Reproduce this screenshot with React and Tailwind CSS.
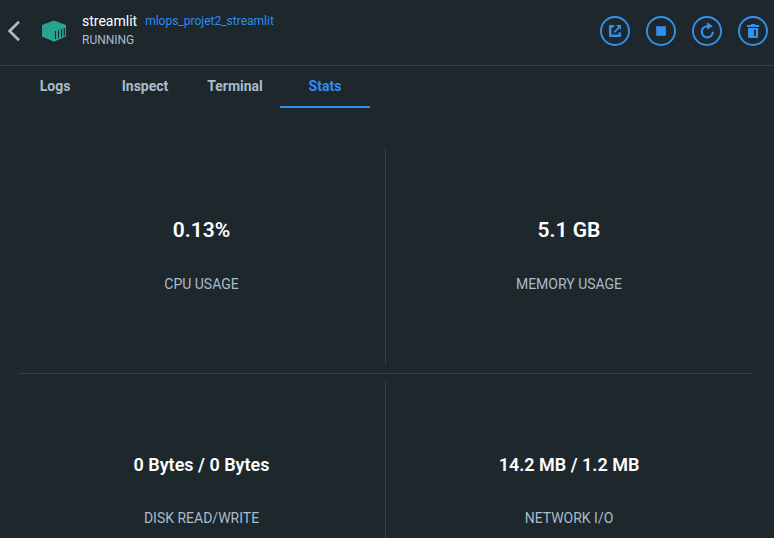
const actions = [
  {
    name: 'Open in browser',
    icon: (
      <g>
        <path d="M14 10.2H10.2V19.8H19.8V16.6" fill="none" stroke="currentColor" strokeWidth="2.5" strokeLinejoin="round" />
        <path d="M14.2 16.4L19 11.4" fill="none" stroke="currentColor" strokeWidth="1.7" />
        <path d="M16 9H21V14Z" fill="currentColor" />
      </g>
    ),
  },
  { name: 'Stop', icon: <rect x="10.2" y="10.2" width="9.6" height="9.6" fill="currentColor" /> },
  {
    name: 'Restart',
    icon: (
      <g>
        <path d="M15.4 10.2A5.6 5.6 0 1 0 20.9 15.8" fill="none" stroke="currentColor" strokeWidth="2.1" />
        <path d="M15 6.2L21 10.2L15 13.6Z" fill="currentColor" />
      </g>
    ),
  },
  {
    name: 'Delete',
    icon: (
      <g fill="currentColor">
        <path d="M9 9H12.6L13.2 8H17L17.6 9H21.2V11H9Z" />
        <path
          fillRule="evenodd"
          d="M10 12H20.2V20.4Q20.2 22 18.6 22H11.6Q10 22 10 20.4ZM16 13.8V19.8H17.8V13.8Z"
        />
      </g>
    ),
  },
];

const tabs = ['Logs', 'Inspect', 'Terminal', 'Stats'];

function Stat({ value, label, className, valueClass }) {
  return (
    <div className={`flex flex-col items-center whitespace-nowrap ${className}`}>
      <div className={`flex h-7 items-center font-semibold text-white ${valueClass}`}>{value}</div>
      <div className="mt-[29px] text-sm leading-5 text-[#a9bccb]">{label}</div>
    </div>
  );
}

export default function App() {
  return (
    <div className="flex h-[538px] w-[774px] flex-col overflow-hidden bg-[#1d272c] font-['Roboto',sans-serif]">
      <header className="flex h-[66px] shrink-0 items-start border-b border-[#333e45] pr-[6px] pl-[7px]">
        <svg className="mt-[20px] h-[22px] w-[14px]" viewBox="0 0 14 22" aria-label="Back">
          <path d="M12 1.8L2.6 11L12 20.2" fill="none" stroke="#a9bccb" strokeWidth="2.7" />
        </svg>
        <svg className="mt-[20px] ml-[21px] h-[22px] w-[24px]" viewBox="0 0 24 22">
          <path d="M12 0.5L24 5V16.5L12 21.7L0 16.5V5Z" fill="#29a391" />
          <path d="M13.5 11V19M16.5 10.2V18.2M19.5 9V17M22.3 8V16" stroke="#1d272c" strokeWidth="1.1" />
        </svg>
        <div className="ml-4 pt-[11px]">
          <div className="flex items-start gap-2">
            <h1 className="text-sm leading-5 text-white">streamlit</h1>
            <a className="text-xs leading-5 text-[#2f8ef4]">mlops_projet2_streamlit</a>
          </div>
          <div className="text-xs leading-[18px] text-[#a9bccb]">RUNNING</div>
        </div>
        <div className="mt-4 ml-auto flex gap-4 text-[#3391ee]">
          {actions.map(({ name, icon }) => (
            <button key={name} aria-label={name} className="size-[30px]">
              <svg className="size-[30px]" viewBox="0 0 30 30">
                <circle cx="15" cy="15" r="14" fill="none" stroke="currentColor" strokeWidth="1.9" />
                {icon}
              </svg>
            </button>
          ))}
        </div>
      </header>
      <nav className="flex h-[42px] shrink-0 pl-[10px]">
        {tabs.map((tab) => (
          <button
            key={tab}
            className={`flex w-[90px] justify-center border-b-2 pt-[10px] text-sm leading-5 font-bold ${
              tab === 'Stats' ? 'border-[#3391ee] text-[#2f8ef4]' : 'border-transparent text-[#a9bccb]'
            }`}
          >
            {tab}
          </button>
        ))}
      </nav>
      <main className="mt-10 mr-[22px] ml-[18px] flex flex-col">
        <div className="grid h-[217px] shrink-0 grid-cols-[368px_366px]">
          <Stat value="0.13%" label="CPU USAGE" className="border-r border-[#333e45] pt-[69px]" valueClass="text-[21px]" />
          <Stat value="5.1 GB" label="MEMORY USAGE" className="pt-[69px]" valueClass="text-[21px]" />
        </div>
        <div className="my-2 h-px shrink-0 bg-[#333e45]" />
        <div className="grid h-[217px] shrink-0 grid-cols-[368px_366px]">
          <Stat value="0 Bytes / 0 Bytes" label="DISK READ/WRITE" className="border-r border-[#333e45] pt-[69px]" valueClass="text-lg" />
          <Stat value="14.2 MB / 1.2 MB" label="NETWORK I/O" className="pt-[69px]" valueClass="text-lg" />
        </div>
      </main>
    </div>
  );
}
